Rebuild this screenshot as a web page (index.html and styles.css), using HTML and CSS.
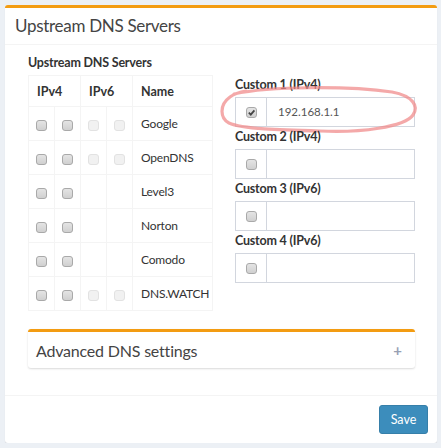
FILE: index.html
```html
<!DOCTYPE html>
<html>
<head>
<meta charset="utf-8">
<link rel="stylesheet" href="styles.css">
</head>
<body>
<div class="box">
  <div class="box-header">Upstream DNS Servers</div>
  <div class="box-body">
    <div class="cols">
      <div class="col-left">
        <div class="label">Upstream DNS Servers</div>
        <table class="dns">
          <colgroup><col class="cc"><col class="cc"><col class="cc"><col class="cc"><col class="cn"></colgroup>
          <thead>
            <tr><th colspan="2">IPv4</th><th colspan="2">IPv6</th><th>Name</th></tr>
          </thead>
          <tbody>
            <tr><td class="c"><span class="cb"></span></td><td class="c"><span class="cb"></span></td><td class="c"><span class="cb dis"></span></td><td class="c"><span class="cb dis"></span></td><td class="name">Google</td></tr>
            <tr><td class="c"><span class="cb"></span></td><td class="c"><span class="cb"></span></td><td class="c"><span class="cb dis"></span></td><td class="c"><span class="cb dis"></span></td><td class="name">OpenDNS</td></tr>
            <tr><td class="c"><span class="cb"></span></td><td class="c"><span class="cb"></span></td><td class="c"></td><td class="c"></td><td class="name">Level3</td></tr>
            <tr><td class="c"><span class="cb"></span></td><td class="c"><span class="cb"></span></td><td class="c"></td><td class="c"></td><td class="name">Norton</td></tr>
            <tr><td class="c"><span class="cb"></span></td><td class="c"><span class="cb"></span></td><td class="c"></td><td class="c"></td><td class="name">Comodo</td></tr>
            <tr><td class="c"><span class="cb"></span></td><td class="c"><span class="cb"></span></td><td class="c"><span class="cb dis"></span></td><td class="c"><span class="cb dis"></span></td><td class="name">DNS.WATCH</td></tr>
          </tbody>
        </table>
      </div>
      <div class="col-right">
        <div class="custom first">
          <div class="clabel">Custom 1 (IPv4)</div>
          <div class="igroup">
            <div class="addon"><span class="cb checked"><svg viewBox="0 0 10 10" width="9" height="9"><path d="M2 5.2 L4.2 7.4 L8.2 2.6" fill="none" stroke="#444" stroke-width="1.9"/></svg></span></div>
            <div class="field">192.168.1.1</div>
          </div>
          <svg class="scribble" width="200" height="52" viewBox="0 0 200 52"><defs><filter id="bl" x="-10%" y="-30%" width="120%" height="160%"><feGaussianBlur stdDeviation="0.7"/></filter></defs><path d="M14 9 C50 1 130 1 172 7 C193 11 199 21 193 30 C185 42 140 48 100 46 C60 45 22 44 9 38 C0 33 -1 20 10 12 C14 9 20 7 26 6" fill="none" stroke="#f08888" stroke-width="3.2" stroke-opacity="0.72" stroke-linecap="round" filter="url(#bl)"/></svg>
        </div>
        <div class="custom">
          <div class="clabel">Custom 2 (IPv4)</div>
          <div class="igroup"><div class="addon"><span class="cb"></span></div><div class="field"></div></div>
        </div>
        <div class="custom">
          <div class="clabel">Custom 3 (IPv6)</div>
          <div class="igroup"><div class="addon"><span class="cb"></span></div><div class="field"></div></div>
        </div>
        <div class="custom">
          <div class="clabel">Custom 4 (IPv6)</div>
          <div class="igroup"><div class="addon"><span class="cb"></span></div><div class="field"></div></div>
        </div>
      </div>
    </div>
    <div class="adv">
      <span class="adv-title">Advanced DNS settings</span>
      <span class="plus">+</span>
    </div>
  </div>
  <div class="box-footer">
    <button class="btn">Save</button>
  </div>
</div>
</body>
</html>
```
FILE: styles.css
```css
html, body { margin: 0; padding: 0; }
body {
  background: #ecf0f5;
  font-family: "Lato", "Open Sans", sans-serif;
  color: #333;
  font-size: 13px;
}
.box {
  position: relative;
  margin: 5px 4px 0 5px;
  background: #fff;
  border-top: 3px solid #f39c12;
  border-radius: 3px;
  box-shadow: 0 1px 1px rgba(0,0,0,0.1);
}
.box-header {
  height: 36px;
  line-height: 36px;
  padding: 0 10px;
  font-size: 17px;
  letter-spacing: -0.3px;
  color: #444;
  border-bottom: 1px solid #f4f4f4;
}
.box-body { padding: 8px 22px 27px 23px; }
.cols { display: flex; }
.col-left { width: 207px; }
.col-right { flex: 1; position: relative; padding-top: 22px; }
.label {
  font-weight: bold;
  font-size: 12.5px;
  letter-spacing: -0.2px;
  color: #333;
  height: 22px;
  line-height: 20px;
}
table.dns {
  border-collapse: collapse;
  table-layout: fixed;
  width: 184px;
}
col.cc { width: 26px; }
col.cn { width: 80px; }
table.dns th, table.dns td {
  border: 1px solid #f4f4f4;
}
table.dns th {
  height: 30px;
  text-align: left;
  padding: 0 8px;
  font-size: 12.5px;
  color: #333;
}
table.dns td { height: 33px; }
table.dns td.c { text-align: center; padding: 0; }
table.dns td.name { padding: 0 6px 0 8px; font-size: 12px; letter-spacing: -0.2px; color: #333; white-space: nowrap; }
.cb {
  display: inline-block;
  box-sizing: border-box;
  width: 11px; height: 11px;
  border: 1px solid #a9a9a9;
  border-radius: 3px;
  background: linear-gradient(#e4e4e4, #d0d0d0);
  vertical-align: middle;
  position: relative;
}
.cb.dis {
  border-color: #e2e2e2;
  background: #f1f1f1;
}
.cb.checked svg { position: absolute; left: 0; top: 0; }
.custom { position: relative; }
.clabel {
  font-weight: bold;
  font-size: 12.5px;
  letter-spacing: -0.2px;
  color: #333;
  height: 22px;
  line-height: 20px;
}
.igroup {
  display: flex;
  height: 30px;
  box-sizing: border-box;
  border: 1px solid #d2d6de;
  width: 180px;
}
.addon {
  width: 30px;
  border-right: 1px solid #d2d6de;
  display: flex; align-items: center; justify-content: center;
}
.field {
  flex: 1;
  padding: 0 11px;
  line-height: 28px;
  font-size: 11.5px;
  color: #555;
}
.scribble {
  position: absolute;
  left: -15px;
  top: 10px;
}
.adv {
  margin-top: 18px;
  border-top: 3px solid #f39c12;
  border-radius: 3px;
  box-shadow: 0 1px 2px rgba(0,0,0,0.15);
  height: 36px;
  display: flex;
  align-items: center;
  justify-content: space-between;
  padding: 0 13px 0 8px;
}
.adv-title { font-size: 16px; letter-spacing: -0.2px; color: #444; }
.plus { font-size: 15px; font-weight: bold; color: #97a0b3; }
.box-footer {
  border-top: 1px solid #f4f4f4;
  padding: 9px 9px 9px 10px;
  display: flex;
  justify-content: flex-end;
}
.btn {
  background: #3c8dbc;
  border: 1px solid #367fa9;
  border-radius: 3px;
  color: #fff;
  font-family: inherit;
  font-size: 12.5px;
  width: 49px;
  height: 29px;
}
```
